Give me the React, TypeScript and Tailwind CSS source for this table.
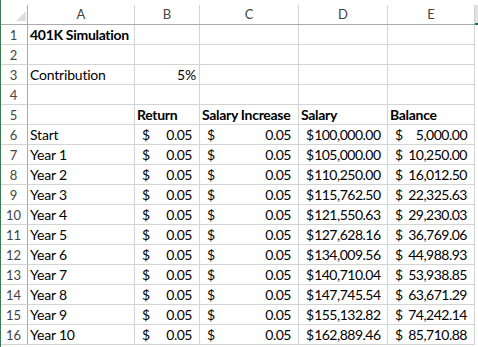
import React from "react";

const cols = ["A", "B", "C", "D", "E"];
const widths = ["w-[107px]", "w-[65px]", "w-[99px]", "w-[89px]", "w-[87px]"];

type Cell =
  | { t: "text"; v: string; bold?: boolean; right?: boolean }
  | { t: "acct"; v: string }
  | null;

const salaries = [
  "100,000.00",
  "105,000.00",
  "110,250.00",
  "115,762.50",
  "121,550.63",
  "127,628.16",
  "134,009.56",
  "140,710.04",
  "147,745.54",
  "155,132.82",
  "162,889.46",
];
const balances = [
  "5,000.00",
  "10,250.00",
  "16,012.50",
  "22,325.63",
  "29,230.03",
  "36,769.06",
  "44,988.93",
  "53,938.85",
  "63,671.29",
  "74,242.14",
  "85,710.88",
];

const rows: Cell[][] = [
  [{ t: "text", v: "401K Simulation", bold: true }, null, null, null, null],
  [null, null, null, null, null],
  [{ t: "text", v: "Contribution" }, { t: "text", v: "5%", right: true }, null, null, null],
  [null, null, null, null, null],
  [
    null,
    { t: "text", v: "Return", bold: true },
    { t: "text", v: "Salary Increase", bold: true },
    { t: "text", v: "Salary", bold: true },
    { t: "text", v: "Balance", bold: true },
  ],
  ...salaries.map((s, i): Cell[] => [
    { t: "text", v: i === 0 ? "Start" : `Year ${i}` },
    { t: "acct", v: "0.05" },
    { t: "acct", v: "0.05" },
    { t: "acct", v: s },
    { t: "acct", v: balances[i] },
  ]),
];

function CellView({ c, w }: { c: Cell; w: string }) {
  return (
    <div
      className={`${w} h-[20px] shrink-0 border-r border-b border-[#d4d4d4] flex items-end pb-[2px] overflow-visible whitespace-nowrap relative`}
    >
      {c && c.t === "text" && (
        <span
          className={`${c.bold ? "font-bold tracking-[-0.3px]" : "tracking-[-0.2px]"} ${c.right ? "ml-auto pr-[3px]" : "pl-[2px]"}`}
        >
          {c.v}
        </span>
      )}
      {c && c.t === "acct" && (
        <div className="flex w-full justify-between pl-[7px] pr-[7px]">
          <span>$</span>
          <span className="tracking-[-0.5px]">{c.v}</span>
        </div>
      )}
    </div>
  );
}

export default function App() {
  return (
    <div
      className="w-[478px] h-[347px] bg-white overflow-hidden relative text-black text-[14px] leading-none"
      style={{ fontFamily: "Lato, 'Open Sans', sans-serif" }}
    >
      <div className="absolute left-0 top-0 bottom-0 w-[1px] bg-[#3b7a52]" />
      {/* header row */}
      <div className="flex h-[25px]">
        <div className="w-[28px] h-[25px] shrink-0 border-b border-[#ababab] pt-[5px]">
          <div className="h-full border-r border-[#ababab] relative">
            <svg className="absolute left-[16px] top-[6px]" width="10" height="10" viewBox="0 0 10 10">
              <polygon points="10,0 10,10 0,10" fill="#dfdfdf" />
            </svg>
          </div>
        </div>
        {cols.map((c, i) => (
          <div key={c} className={`${widths[i]} h-[25px] shrink-0 border-b border-[#ababab] pt-[5px]`}>
            <div className="h-full border-r border-[#d4d4d4] flex items-center justify-center text-[#444444] text-[13px]">
              {c}
            </div>
          </div>
        ))}
        <div className="flex-1 h-[25px] pt-[5px]">
          <div className="h-full bg-[#e1e1e1] border-b-2 border-[#217346]" />
        </div>
      </div>
      {rows.map((r, ri) => (
        <div key={ri} className="flex h-[20px]">
          <div className="w-[28px] h-[20px] shrink-0 border-r border-[#ababab] border-b border-b-[#d4d4d4] flex items-end justify-center pb-[2px] text-[#444444] text-[13px]">
            {ri + 1}
          </div>
          {r.map((c, ci) => (
            <CellView key={ci} c={c} w={widths[ci]} />
          ))}
          <div className="flex-1" />
        </div>
      ))}
    </div>
  );
}
